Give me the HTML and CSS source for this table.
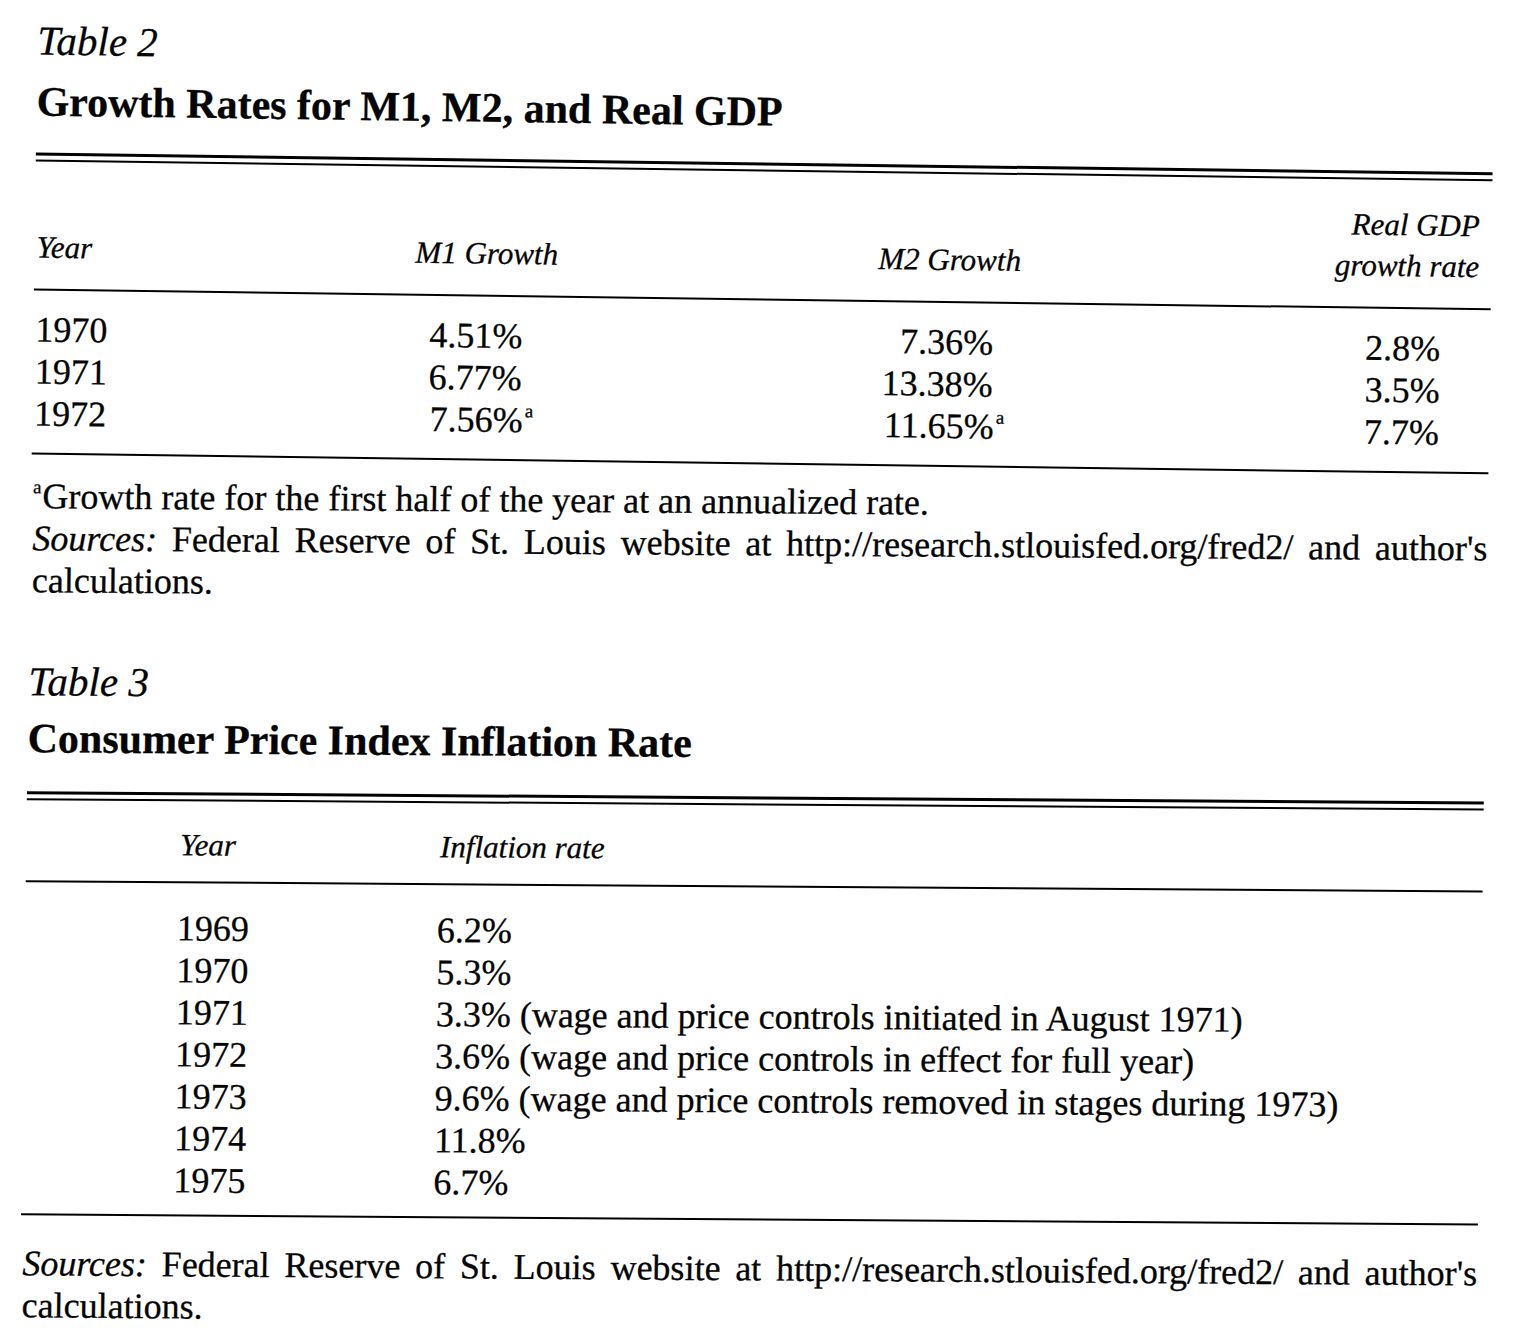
FILE: index.html
```html
<!DOCTYPE html>
<html lang="en">
<head>
<meta charset="utf-8">
<title>Tables 2 and 3</title>
<link rel="stylesheet" href="styles.css">
</head>
<body>
<div class="page">
  <section class="block t2">
    <div class="label">Table 2</div>
    <h1 class="title">Growth Rates for M1, M2, and Real GDP</h1>
    <div class="double-rule"></div>
    <div class="grid2 head">
      <div class="c1">Year</div>
      <div class="c2">M1 Growth</div>
      <div class="c3">M2 Growth</div>
      <div class="c4">Real GDP<br>growth rate</div>
    </div>
    <div class="grid2 rows">
      <div class="c1">1970</div>
      <div class="c2"><span class="num n-m1">4.51%</span></div>
      <div class="c3"><span class="num n-m2">7.36%</span></div>
      <div class="c4">2.8%</div>

      <div class="c1">1971</div>
      <div class="c2"><span class="num n-m1">6.77%</span></div>
      <div class="c3"><span class="num n-m2">13.38%</span></div>
      <div class="c4">3.5%</div>

      <div class="c1">1972</div>
      <div class="c2"><span class="num n-m1">7.56%<sup class="mark">a</sup></span></div>
      <div class="c3"><span class="num n-m2">11.65%<sup class="mark">a</sup></span></div>
      <div class="c4">7.7%</div>
    </div>
  </section>

  <section class="block notes n2">
    <p><sup class="lead">a</sup>Growth rate for the first half of the year at an annualized rate.</p>
    <p class="src"><em>Sources:</em> Federal Reserve of St. Louis website at http://research.stlouisfed.org/fred2/ and author's calculations.</p>
  </section>

  <section class="block t3">
    <div class="label">Table 3</div>
    <h1 class="title">Consumer Price Index Inflation Rate</h1>
    <div class="double-rule"></div>
    <div class="grid3 head">
      <div class="y">Year</div>
      <div class="v">Inflation rate</div>
    </div>
    <div class="grid3 rows">
      <div class="y">1969</div><div class="v">6.2%</div>
      <div class="y">1970</div><div class="v">5.3%</div>
      <div class="y">1971</div><div class="v">3.3% (wage and price controls initiated in August 1971)</div>
      <div class="y">1972</div><div class="v">3.6% (wage and price controls in effect for full year)</div>
      <div class="y">1973</div><div class="v">9.6% (wage and price controls removed in stages during 1973)</div>
      <div class="y">1974</div><div class="v">11.8%</div>
      <div class="y">1975</div><div class="v">6.7%</div>
    </div>
    <div class="notes n3">
      <p class="src"><em>Sources:</em> Federal Reserve of St. Louis website at http://research.stlouisfed.org/fred2/ and author's calculations.</p>
    </div>
  </section>
</div>
</body>
</html>
```

FILE: styles.css
```css
* {
  box-sizing: border-box;
  margin: 0;
  padding: 0;
}

html,
body {
  background: #ffffff;
}

body {
  width: 1528px;
  height: 1338px;
  overflow: hidden;
  font-family: "Liberation Serif", "Times New Roman", serif;
  color: #050505;
  -webkit-text-stroke: 0.3px #050505;
}

.page {
  transform: skewX(-0.8deg);
  transform-origin: 0 0;
}

.block {
  width: 1495px;
  padding-left: 38px;
  transform-origin: 0 0;
}

.label {
  font-style: italic;
  font-size: 41px;
  line-height: 44px;
}

.title {
  font-weight: bold;
  font-size: 42px;
  line-height: 46px;
}

.double-rule {
  height: 9px;
  border-top: 3px solid #000;
  border-bottom: 2px solid #000;
}

/* ---------- Table 2 ---------- */
.t2 {
  padding-top: 18px;
  transform: skewY(0.78deg);
}

.t2 .title {
  margin-top: 16px;
}

.t2 .double-rule {
  margin-top: 28px;
}

.grid2 {
  display: grid;
  grid-template-columns: 380px 463px 457px 157px;
}

.head {
  font-style: italic;
  font-size: 31px;
  line-height: 41px;
  align-items: end;
  border-bottom: 2px solid #000;
}

.t2 .head {
  margin-top: 24px;
  padding-bottom: 21px;
}

.grid2 .c1 {
  padding-left: 2px;
}

.grid2.head .c2 {
  padding-left: 1px;
}

.grid2.head .c3 {
  padding-left: 1px;
}

.grid2.head .c4 {
  text-align: right;
  padding-right: 12px;
}

.rows {
  font-size: 36px;
  line-height: 42px;
  border-bottom: 2px solid #000;
}

.t2 .rows {
  padding-top: 18px;
  padding-bottom: 18px;
}

.num {
  display: inline-block;
  text-align: right;
  white-space: nowrap;
}

.n-m1 {
  width: 109px;
}

.n-m2 {
  width: 117px;
}

.grid2.rows .c4 {
  text-align: right;
  padding-right: 50px;
}

.mark {
  font-size: 19px;
  line-height: 0;
  vertical-align: 15px;
  margin-left: 2px;
  margin-right: -12px;
}

/* ---------- Notes ---------- */
.notes {
  font-size: 36px;
  line-height: 42px;
}

.n2 {
  margin-top: 21px;
  padding-left: 40px;
  transform: skewY(0.4deg);
}

.notes p {
  width: 1455px;
}

.notes .src {
  text-align: justify;
}

.notes em {
  font-style: italic;
}

.lead {
  font-size: 19px;
  line-height: 0;
  vertical-align: 15px;
  margin-right: 1px;
}

/* ---------- Table 3 ---------- */
.t3 {
  margin-top: 58px;
  transform: skewY(0.4deg);
}

.t3 .title {
  margin-top: 12px;
}

.t3 .double-rule {
  margin-top: 30px;
}

.grid3 {
  display: grid;
  grid-template-columns: 412px 1fr;
}

.t3 .head {
  margin-top: 23px;
  padding-bottom: 16px;
}

.grid3.head .y {
  padding-left: 154px;
}

.grid3.head .v {
  padding-left: 2px;
}

.t3 .rows {
  padding-top: 24px;
  padding-bottom: 13px;
}

.grid3.rows .y {
  padding-left: 152px;
}

.n3 {
  margin-top: 27px;
  padding-left: 2px;
}
```
